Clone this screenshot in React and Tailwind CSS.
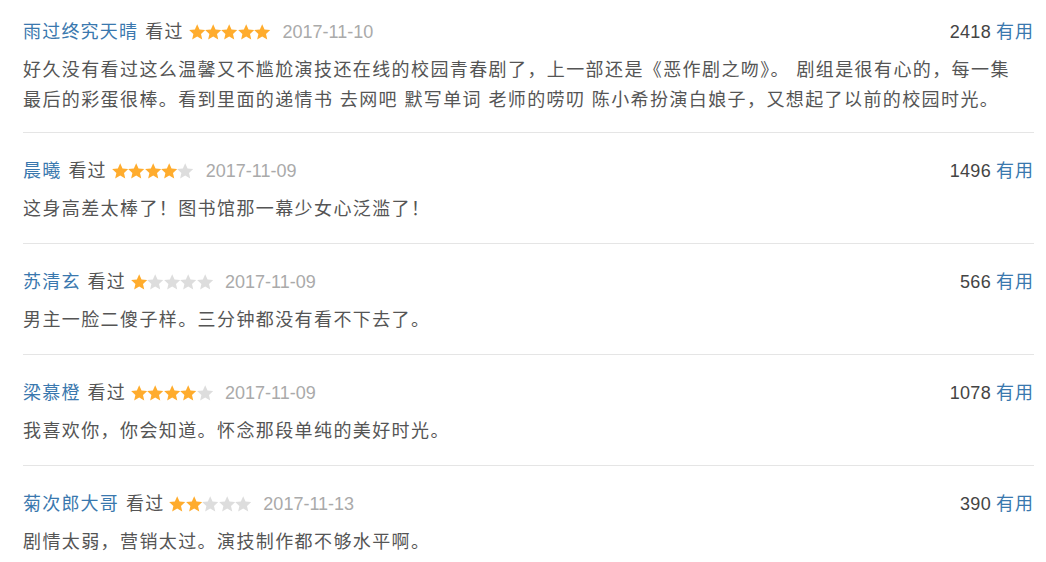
import React from "react";

const reviews = [
  {
    name: "雨过终究天晴",
    stars: 5,
    date: "2017-11-10",
    votes: 2418,
    text: "好久没有看过这么温馨又不尴尬演技还在线的校园青春剧了，上一部还是《恶作剧之吻》。 剧组是很有心的，每一集最后的彩蛋很棒。看到里面的递情书 去网吧 默写单词 老师的唠叨 陈小希扮演白娘子，又想起了以前的校园时光。",
  },
  { name: "晨曦", stars: 4, date: "2017-11-09", votes: 1496, text: "这身高差太棒了！图书馆那一幕少女心泛滥了！" },
  { name: "苏清玄", stars: 1, date: "2017-11-09", votes: 566, text: "男主一脸二傻子样。三分钟都没有看不下去了。" },
  { name: "梁慕橙", stars: 4, date: "2017-11-09", votes: 1078, text: "我喜欢你，你会知道。怀念那段单纯的美好时光。" },
  { name: "菊次郎大哥", stars: 2, date: "2017-11-13", votes: 390, text: "剧情太弱，营销太过。演技制作都不够水平啊。" },
];

function Star({ on }) {
  return (
    <svg width="16.4" height="16" viewBox="0.8 1.2 22.4 21.6" className="block">
      <path
        d="M12 1.5l3.2 7.1 7.8.8-5.8 5.2 1.7 7.7L12 18.3l-6.9 4 1.7-7.7L1 9.4l7.8-.8z"
        fill={on ? "#ffac2d" : "#dddddd"}
      />
    </svg>
  );
}

function Stars({ n }) {
  return (
    <span className="flex items-center">
      {[1, 2, 3, 4, 5].map((i) => (
        <Star key={i} on={i <= n} />
      ))}
    </span>
  );
}

export default function App() {
  return (
    <div
      className="bg-white w-[1046px] h-[562px] overflow-hidden pl-[23px] pr-[12px]"
      style={{ fontFamily: '"Liberation Sans", "Noto Sans CJK SC", sans-serif' }}
    >
      {reviews.map((r, idx) => (
        <div
          key={idx}
          className={
            "border-b border-[#e5e5e5] " + (idx === 0 ? "pt-[17px] pb-[17px]" : "pt-[23px] pb-[19px]")
          }
        >
          <div className="flex items-center h-[30px] text-[18px] leading-[30px]">
            <span className="text-[#3a78ae] tracking-[1.2px]">{r.name}</span>
            <span className="text-[#555] ml-[7px] tracking-[1.2px]">看过</span>
            <span className="ml-[5px]">
              <Stars n={r.stars} />
            </span>
            <span className="text-[#aaa] ml-[12px]">{r.date}</span>
            <span className="ml-auto text-[#444] tracking-[0.3px]">{r.votes}</span>
            <span className="text-[#3a78ae] ml-[5px] tracking-[1px]">有用</span>
          </div>
          <p className="mt-[8px] text-[18px] leading-[30px] text-[#555] tracking-[1.4px] pr-[15px]">{r.text}</p>
        </div>
      ))}
    </div>
  );
}
